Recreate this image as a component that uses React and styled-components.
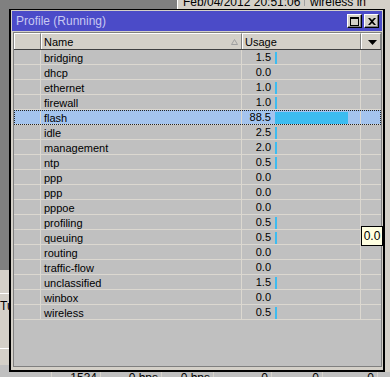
import React from "react";
import styled, { createGlobalStyle } from "styled-components";

const rows = [
  ["bridging", 1.5],
  ["dhcp", 0],
  ["ethernet", 1],
  ["firewall", 1],
  ["flash", 88.5],
  ["idle", 2.5],
  ["management", 2],
  ["ntp", 0.5],
  ["ppp", 0],
  ["ppp", 0],
  ["pppoe", 0],
  ["profiling", 0.5],
  ["queuing", 0.5],
  ["routing", 0],
  ["traffic-flow", 0],
  ["unclassified", 1.5],
  ["winbox", 0],
  ["wireless", 0.5],
];

const barWidth = (v) => (v > 0 ? Math.max(2, Math.round(v * 0.825)) : 0);

const GlobalStyle = createGlobalStyle`
  html, body {
    margin: 0;
    padding: 0;
    background: #808080;
  }
  body {
    font-family: "Liberation Sans", Arial, sans-serif;
    font-size: 11px;
    color: #000;
  }
`;

const Desktop = styled.div`
  position: relative;
  width: 390px;
  height: 377px;
  overflow: hidden;
  background: #808080;
`;

/* windows lying behind the profile window */
const BackTop = styled.div`
  position: absolute;
  left: 177px;
  top: 0;
  width: 213px;
  height: 9px;
  background: #d4d0c8;
  border-left: 1px solid #fff;
  display: flex;
  overflow: hidden;
`;

const BackCell = styled.div`
  width: ${(p) => p.$w}px;
  flex: none;
  height: 9px;
  border-right: 1px solid #a0a0a0;
  padding-left: 5px;
  box-sizing: border-box;
  font-size: 12px;
  line-height: 11px;
  margin-top: -3px;
  white-space: nowrap;
  overflow: hidden;
`;

const BackLeft = styled.div`
  position: absolute;
  left: 0;
  top: 270px;
  width: 9px;
  height: 107px;
  background: #d4d0c8;
  display: flex;
  flex-direction: column;
`;

const LeftStrip = styled.div`
  height: ${(p) => p.$h}px;
  flex: none;
  box-sizing: border-box;
  padding-top: ${(p) => p.$pad || 0}px;
  border-bottom: ${(p) => (p.$line ? "1px solid #fff" : "none")};
  background: ${(p) => p.$bg || "transparent"};
  font-size: 12px;
  line-height: 12px;
  white-space: nowrap;
  overflow: hidden;
`;

const BackBottom = styled.div`
  position: absolute;
  left: 0;
  top: 372px;
  width: 390px;
  height: 5px;
  background: #c0c0c0;
  display: flex;
  overflow: hidden;
`;

const BottomCell = styled.div`
  width: ${(p) => p.$w}px;
  flex: none;
  height: 5px;
  border-right: 1px solid #d8d4cc;
  box-sizing: border-box;
  text-align: right;
  padding-right: 3px;
  line-height: 12px;
  font-size: 12px;
  white-space: nowrap;
  overflow: hidden;
`;

const BackRight = styled.div`
  position: absolute;
  left: 385px;
  top: 9px;
  width: 5px;
  height: 363px;
  background: #d4d0c8;
`;

/* profile window */
const Window = styled.div`
  position: absolute;
  left: 9px;
  top: 9px;
  width: 376px;
  height: 363px;
  box-sizing: border-box;
  background: #d4d0c8;
  border-top: 1px solid #000;
  border-left: 2px solid #000;
  border-right: 2px solid #000;
  border-bottom: 2px solid #000;
  padding: 1px 1px 3px 1px;
  display: flex;
  flex-direction: column;
`;

const TitleBar = styled.div`
  height: 20px;
  flex: none;
  background: #4b4bc8;
  display: flex;
  align-items: center;
  padding: 0 3px 0 4px;
`;

const Title = styled.div`
  flex: 1;
  color: #c8c8f2;
  font-size: 12px;
`;

const TitleButton = styled.div`
  width: 15px;
  height: 14px;
  box-sizing: border-box;
  margin-left: 2px;
  background: #d4d0c8;
  border-top: 1px solid #fff;
  border-left: 1px solid #fff;
  border-right: 1px solid #000;
  border-bottom: 1px solid #000;
  box-shadow: inset -1px -1px 0 #808080;
  display: flex;
  align-items: center;
  justify-content: center;
`;

const List = styled.div`
  flex: 1;
  margin: 1px 0 0 1px;
  border: 1px solid #808080;
  background: #c0c0c0;
  display: flex;
  flex-direction: column;
  overflow: hidden;
`;

const Header = styled.div`
  height: 17px;
  flex: none;
  display: flex;
  background: #d4d0c8;
  border-bottom: 1px solid #404040;
  box-sizing: border-box;
`;

const HeadCell = styled.div`
  width: ${(p) => p.$w}px;
  flex: ${(p) => (p.$grow ? 1 : "none")};
  box-sizing: border-box;
  border-top: 1px solid #fff;
  border-left: 1px solid #fff;
  border-right: 1px solid #808080;
  padding: 1px 0 0 2px;
  display: flex;
  align-items: center;
  justify-content: ${(p) => (p.$center ? "center" : "space-between")};
  font-size: 11px;
  line-height: 14px;
`;

const SortMark = styled.svg`
  margin-right: 3px;
`;

const Row = styled.div`
  height: 15px;
  flex: none;
  display: flex;
  box-sizing: border-box;
  border-bottom: 1px solid #dcd8d0;
  background: ${(p) => (p.$selected ? "#a4c4ee" : "transparent")};
  outline: ${(p) => (p.$selected ? "1px dotted #222" : "none")};
  outline-offset: -1px;
`;

const Cell = styled.div`
  width: ${(p) => p.$w}px;
  flex: ${(p) => (p.$grow ? 1 : "none")};
  box-sizing: border-box;
  border-right: ${(p) => (p.$last ? "none" : "1px solid #dcd8d0")};
  padding-left: ${(p) => (p.$flush ? 0 : 3)}px;
  font-size: 11px;
  line-height: 14px;
  padding-top: 1px;
  white-space: nowrap;
  display: flex;
  align-items: flex-start;
`;

const Value = styled.span`
  width: 29px;
  text-align: right;
  flex: none;
  line-height: 13px;
`;

const Bar = styled.span`
  display: block;
  height: 12px;
  margin: 1px 0 0 4px;
  background: #3cbcf0;
`;

const Tooltip = styled.div`
  position: absolute;
  left: 361px;
  top: 226px;
  width: 22px;
  height: 20px;
  box-sizing: border-box;
  background: #ffffe1;
  border: 1px solid #000;
  font-size: 12px;
  line-height: 18px;
  text-align: center;
`;

const cols = [27, 201, 119];

export default function App() {
  return (
    <Desktop>
      <GlobalStyle />
      <BackTop>
        <BackCell $w={127}>Feb/04/2012 20:51:06</BackCell>
        <BackCell $w={61}>wireless info</BackCell>
        <BackCell $w={25} />
      </BackTop>
      <BackLeft>
        <LeftStrip $h={24} $line />
        <LeftStrip $h={18} $pad={6}>Tu</LeftStrip>
        <LeftStrip $h={37} $line />
        <LeftStrip $h={16} />
        <LeftStrip $h={12} $bg="#c0c0c0" />
      </BackLeft>
      <BackRight />
      <BackBottom>
        <BottomCell $w={52} />
        <BottomCell $w={49}>1534</BottomCell>
        <BottomCell $w={61}>0 bps</BottomCell>
        <BottomCell $w={52}>0 bps</BottomCell>
        <BottomCell $w={58}>0</BottomCell>
        <BottomCell $w={51}>0</BottomCell>
        <BottomCell $w={55}>0</BottomCell>
      </BackBottom>

      <Window>
        <TitleBar>
          <Title>Profile (Running)</Title>
          <TitleButton>
            <svg width="9" height="9" viewBox="0 0 9 9">
              <rect x="0.5" y="0.5" width="8" height="8" fill="none" stroke="#000" />
              <rect x="0" y="0" width="9" height="2" fill="#000" />
            </svg>
          </TitleButton>
          <TitleButton>
            <svg width="8" height="7" viewBox="0 0 8 7">
              <path d="M0 0h2l2 2 2-2h2L5 3.5 8 7H6L4 5 2 7H0l3-3.5z" fill="#000" />
            </svg>
          </TitleButton>
        </TitleBar>
        <List>
          <Header>
            <HeadCell $w={cols[0]} />
            <HeadCell $w={cols[1]}>
              <span>Name</span>
              <SortMark width="7" height="6" viewBox="0 0 7 6">
                <path d="M3.5 0.5L6.5 5.5H0.5Z" fill="none" stroke="#a0a0a0" />
              </SortMark>
            </HeadCell>
            <HeadCell $w={cols[2]}>
              <span>Usage</span>
            </HeadCell>
            <HeadCell $grow $center>
              <svg width="9" height="5" viewBox="0 0 9 5">
                <path d="M0 0h9L4.5 5z" fill="#000" />
              </svg>
            </HeadCell>
          </Header>
          {rows.map(([name, usage], i) => (
            <Row key={i} $selected={name === "flash"}>
              <Cell $w={cols[0]} />
              <Cell $w={cols[1]}>{name}</Cell>
              <Cell $w={cols[2]} $flush>
                <Value>{usage.toFixed(1)}</Value>
                {usage > 0 && <Bar style={{ width: barWidth(usage) }} />}
              </Cell>
              <Cell $grow $last />
            </Row>
          ))}
        </List>
      </Window>

      <Tooltip>0.0</Tooltip>
    </Desktop>
  );
}
